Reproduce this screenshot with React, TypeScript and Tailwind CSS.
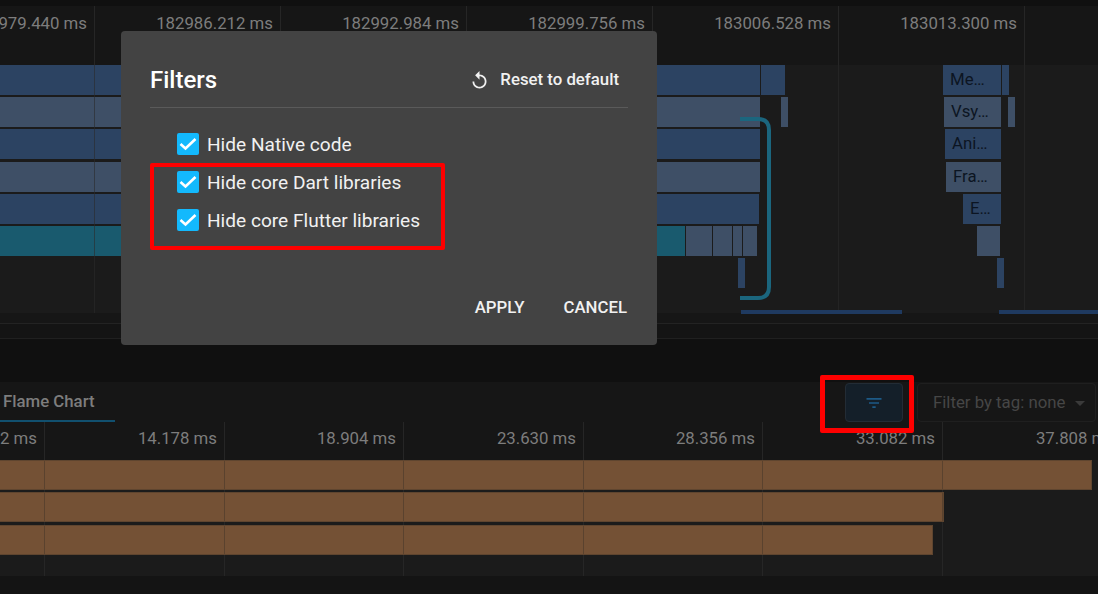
import { MdReplay, MdFilterList, MdArrowDropDown } from "react-icons/md";

const font = { fontFamily: "Roboto, sans-serif" };

const topTicks = [94, 280, 466, 652, 838, 1024];
const topLabels = [
  { text: "182979.440 ms", right: 87 },
  { text: "182986.212 ms", right: 273 },
  { text: "182992.984 ms", right: 459 },
  { text: "182999.756 ms", right: 645 },
  { text: "183006.528 ms", right: 831 },
  { text: "183013.300 ms", right: 1017 },
];

const bottomTicks = [44, 224, 403, 583, 762, 942];
const bottomLabels = [
  { text: "9.452 ms", right: 37 },
  { text: "14.178 ms", right: 217 },
  { text: "18.904 ms", right: 396 },
  { text: "23.630 ms", right: 576 },
  { text: "28.356 ms", right: 755 },
  { text: "33.082 ms", right: 935 },
  { text: "37.808 ms", right: 1115 },
];

const dark = "bg-[#2c4362]";
const light = "bg-[#3e4f66]";
const teal = "bg-[#195a6e]";

// x, width, row, colour, label
const blocks: [number, number, number, string, string?][] = [
  [0, 760, 0, dark],
  [761, 24, 0, dark],
  [0, 760, 1, light],
  [0, 760, 2, dark],
  [0, 760, 3, light],
  [0, 759, 4, dark],
  [0, 685, 5, teal],
  [686, 26, 5, light],
  [713, 19, 5, light],
  [733, 9, 5, light],
  [743, 14, 5, light],
  [781, 1, 1, light],
  [738, 2, 6, dark],
  [943, 58, 0, dark, "Me…"],
  [1002, 7, 0, dark],
  [944, 57, 1, light, "Vsy…"],
  [1008, 1, 1, light],
  [945, 56, 2, dark, "Ani…"],
  [946, 55, 3, light, "Fra…"],
  [963, 38, 4, dark, "E…"],
  [977, 16, 5, light],
  [993, 6, 5, light],
  [997, 1, 6, dark],
];
const rowTops = [0, 32, 64, 97, 129, 161, 193];

const brown = [
  { width: 1092, top: 0 },
  { width: 944, top: 32 },
  { width: 933, top: 65 },
];

function Check({ label }: { label: string }) {
  return (
    <label className="flex h-[38px] items-center gap-2">
      <span className="flex h-[22px] w-[22px] items-center justify-center rounded-[2px] bg-[#13b9fd]">
        <svg viewBox="0 0 22 22" className="h-[22px] w-[22px]" fill="none">
          <path d="M3.5 11 L8.5 15.5 L18.5 6" stroke="#fff" strokeWidth="2.6" />
        </svg>
      </span>
      <span className="pt-[2px] text-[19.1px] text-[#f1f1f1]">{label}</span>
    </label>
  );
}

function Ticks({ xs, tone }: { xs: number[]; tone: string }) {
  return (
    <>
      {xs.map((x) => (
        <div key={x} className={`absolute top-0 bottom-0 w-px ${tone}`} style={{ left: x }} />
      ))}
    </>
  );
}

export default function App() {
  return (
    <div className="relative flex h-[594px] w-[1098px] flex-col overflow-hidden bg-[#101010]" style={font}>
      <div className="h-[6px] bg-[#101010]" />

      {/* top timeline */}
      <div className="relative h-[59px] bg-[#161616]">
        <Ticks xs={topTicks} tone="bg-[#262626]" />
        {topLabels.map((l) => (
          <span
            key={l.text}
            className="absolute top-[8px] text-[16.8px] leading-[19px] whitespace-nowrap text-[#7d7d7d]"
            style={{ right: 1098 - l.right }}
          >
            {l.text}
          </span>
        ))}
      </div>
      <div className="relative h-[248px] bg-[#1b1b1b]">
        {blocks.map(([x, w, row, color, label], i) => (
          <div
            key={i}
            className={`absolute flex h-[30px] items-center overflow-hidden pl-[7px] text-[16.8px] text-[#0c1522] ${color}`}
            style={{ left: x, width: w, top: rowTops[row] }}
          >
            {label}
          </div>
        ))}
        <Ticks xs={topTicks} tone="bg-[#2b2b2b]/60" />
        <svg className="absolute top-[50px] left-[738px] h-[190px] w-[40px]" viewBox="0 0 40 190" fill="none">
          <path d="M2 4 H20 Q31 4 31 15 V172 Q31 183 20 183 H2" stroke="#1b667e" strokeWidth="4" />
        </svg>
        <div className="absolute top-[245px] left-[741px] h-[4px] w-[161px] bg-[#1f3a60]" />
        <div className="absolute top-[245px] left-[999px] h-[4px] w-[99px] bg-[#1f3a60]" />
      </div>
      <div className="h-[11px] border-b border-[#232323] bg-[#161616]" />
      <div className="h-[15px] border-b border-[#202020] bg-[#141414]" />
      <div className="h-[43px] bg-[#101010]" />

      {/* tab bar */}
      <div className="flex h-[40px] items-start justify-between bg-[#161616]">
        <div className="flex h-[40px] w-[115px] items-center border-b-2 border-[#11506f] pt-[2px] pl-[3px] text-[16.8px] font-medium text-[#7d7d7d]">
          Flame Chart
        </div>
        <div className="mt-px mr-[2px] flex gap-[14px]">
          <div className="flex h-[39px] w-[58px] items-center justify-center rounded-[4px] border border-[#232c35] bg-[#141f29]">
            <MdFilterList className="h-[20px] w-[20px] text-[#1c5a86]" />
          </div>
          <div className="flex h-[39px] w-[179px] items-center justify-between rounded-[4px] border border-[#1f1f1f] pt-[1px] pr-[3px] pl-[15px] text-[16.8px] text-[#464646]">
            <span className="whitespace-nowrap">Filter by tag: none</span>
            <MdArrowDropDown className="h-[24px] w-[24px] shrink-0 text-[#3a3a3a]" />
          </div>
        </div>
      </div>

      {/* bottom timeline */}
      <div className="relative h-[38px] bg-[#161616]">
        <Ticks xs={bottomTicks} tone="bg-[#262626]" />
        {bottomLabels.map((l) => (
          <span
            key={l.text}
            className="absolute top-[7px] text-[16.8px] leading-[19px] whitespace-nowrap text-[#7d7d7d]"
            style={{ right: 1098 - l.right }}
          >
            {l.text}
          </span>
        ))}
      </div>
      <div className="relative h-[116px] bg-[#1b1b1b]">
        <Ticks xs={bottomTicks} tone="bg-[#262626]" />
        {brown.map((b) => (
          <div
            key={b.top}
            className="absolute left-0 h-[30px] overflow-hidden border-y border-r border-[#5f452f] bg-[#745135]"
            style={{ top: b.top, width: b.width }}
          >
            <Ticks xs={bottomTicks} tone="bg-[#5a422e]" />
          </div>
        ))}
      </div>
      <div className="h-[18px] flex-1 bg-[#141414]" />

      {/* filter dialog */}
      <div className="absolute top-[31px] left-[121px] flex h-[314px] w-[536px] flex-col rounded-[4px] bg-[#434343] px-[29px] text-white">
        <div className="flex h-[77px] items-center justify-between border-b border-[#5a5a5a] pt-[26px] pb-[4px]">
          <h2 className="text-[24px] font-medium">Filters</h2>
          <button className="mr-[9px] flex items-center gap-[10px] text-[16.8px] font-medium text-[#f1f1f1]">
            <MdReplay className="h-[21px] w-[21px]" />
            Reset to default
          </button>
        </div>
        <div className="mt-[17px] pl-[27px]">
          <Check label="Hide Native code" />
          <Check label="Hide core Dart libraries" />
          <Check label="Hide core Flutter libraries" />
        </div>
        <div className="mt-[56px] flex justify-end gap-[39px] pr-[1px] text-[16.8px] font-medium text-[#f1f1f1]">
          <button>APPLY</button>
          <button>CANCEL</button>
        </div>
      </div>

      {/* highlight boxes */}
      <div className="absolute top-[163px] left-[150px] h-[87px] w-[295px] rounded-[2px] border-4 border-[#fe0000]" />
      <div className="absolute top-[375px] left-[820px] h-[58px] w-[94px] rounded-[2px] border-[5px] border-[#fe0000]" />
    </div>
  );
}
